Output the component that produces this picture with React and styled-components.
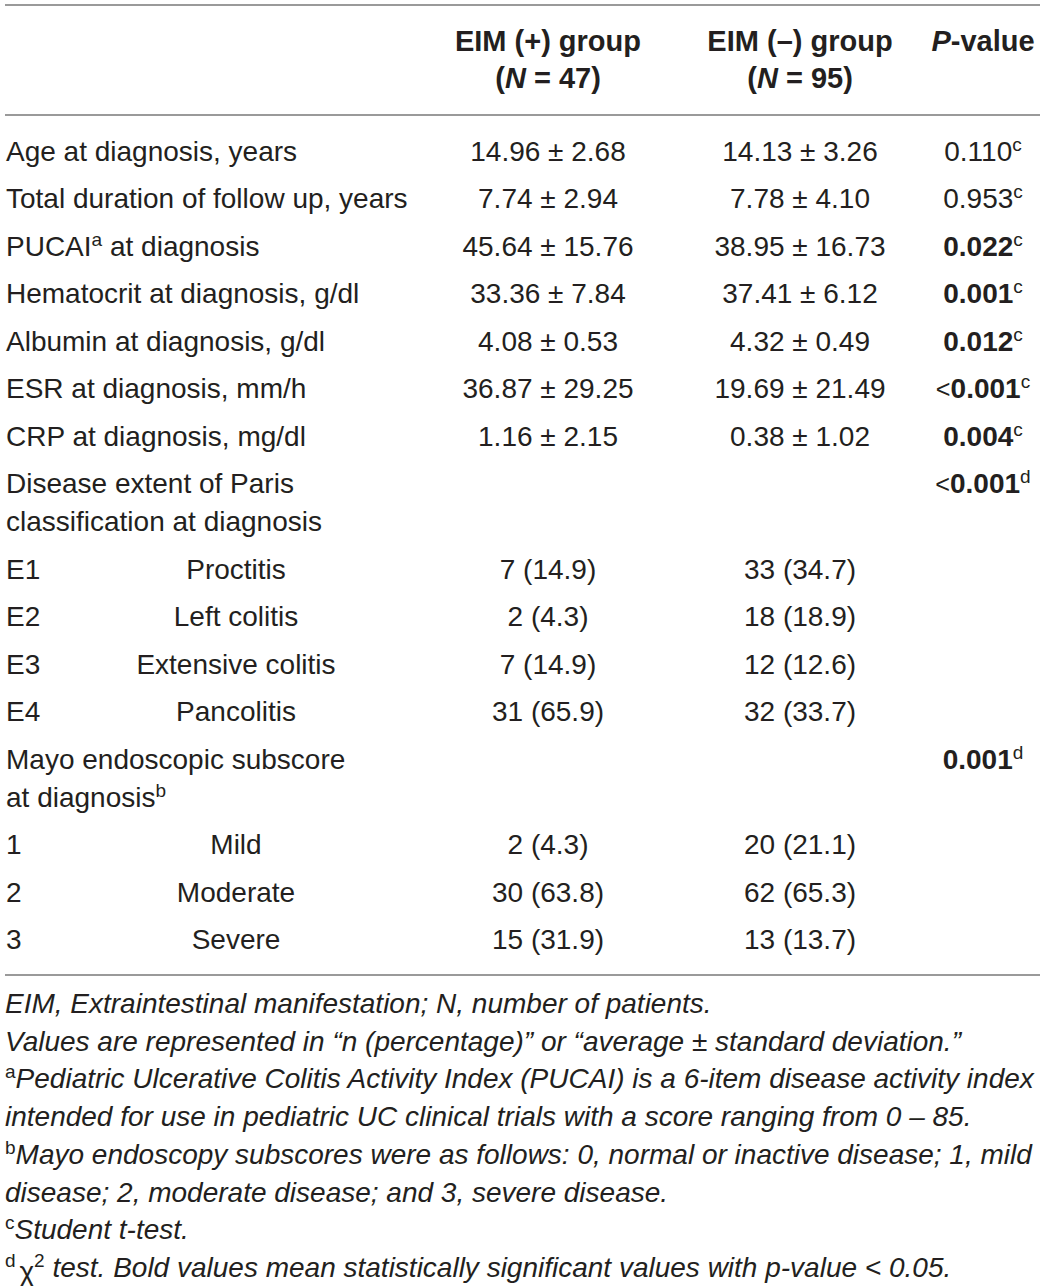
import React from "react";
import styled, { createGlobalStyle } from "styled-components";

const GlobalStyle = createGlobalStyle`
  html, body {
    margin: 0;
    padding: 0;
    background: #ffffff;
  }
  body {
    font-family: "Liberation Sans", Arial, sans-serif;
    color: #231f20;
  }
`;

const summary = [
  { label: "Age at diagnosis, years", plus: "14.96 ± 2.68", minus: "14.13 ± 3.26", p: "0.110", note: "c" },
  { label: "Total duration of follow up, years", plus: "7.74 ± 2.94", minus: "7.78 ± 4.10", p: "0.953", note: "c" },
  { label: "PUCAI", mark: "a", tail: " at diagnosis", plus: "45.64 ± 15.76", minus: "38.95 ± 16.73", p: "0.022", note: "c", bold: true },
  { label: "Hematocrit at diagnosis, g/dl", plus: "33.36 ± 7.84", minus: "37.41 ± 6.12", p: "0.001", note: "c", bold: true },
  { label: "Albumin at diagnosis, g/dl", plus: "4.08 ± 0.53", minus: "4.32 ± 0.49", p: "0.012", note: "c", bold: true },
  { label: "ESR at diagnosis, mm/h", plus: "36.87 ± 29.25", minus: "19.69 ± 21.49", p: "0.001", note: "c", bold: true, lt: true },
  { label: "CRP at diagnosis, mg/dl", plus: "1.16 ± 2.15", minus: "0.38 ± 1.02", p: "0.004", note: "c", bold: true },
];

const extent = [
  { code: "E1", name: "Proctitis", plus: "7 (14.9)", minus: "33 (34.7)" },
  { code: "E2", name: "Left colitis", plus: "2 (4.3)", minus: "18 (18.9)" },
  { code: "E3", name: "Extensive colitis", plus: "7 (14.9)", minus: "12 (12.6)" },
  { code: "E4", name: "Pancolitis", plus: "31 (65.9)", minus: "32 (33.7)" },
];

const mayo = [
  { code: "1", name: "Mild", plus: "2 (4.3)", minus: "20 (21.1)" },
  { code: "2", name: "Moderate", plus: "30 (63.8)", minus: "62 (65.3)" },
  { code: "3", name: "Severe", plus: "15 (31.9)", minus: "13 (13.7)" },
];

const PValue = ({ value, note, bold, lt }) => (
  <Cell>
    {lt && <Lt>&lt;</Lt>}
    {bold ? <Strong>{value}</Strong> : value}
    <Sup>{note}</Sup>
  </Cell>
);

const SubRow = ({ code, name, plus, minus }) => (
  <Row>
    <SubLabel>
      <span>{code}</span>
      <SubName>{name}</SubName>
    </SubLabel>
    <Cell>{plus}</Cell>
    <Cell>{minus}</Cell>
    <Cell />
  </Row>
);

const App = () => {
  return (
    <Page>
      <GlobalStyle />
      <Table>
        <Head>
          <Label />
          <HeadCell>
            EIM (+) group
            <br />
            (<i>N</i> = 47)
          </HeadCell>
          <HeadCell>
            EIM (–) group
            <br />
            (<i>N</i> = 95)
          </HeadCell>
          <HeadCell>
            <i>P</i>-value
          </HeadCell>
        </Head>

        <Body>
          {summary.map((r) => (
            <Row key={r.label}>
              <Label>
                {r.label}
                {r.mark && <Sup>{r.mark}</Sup>}
                {r.tail}
              </Label>
              <Cell>{r.plus}</Cell>
              <Cell>{r.minus}</Cell>
              <PValue value={r.p} note={r.note} bold={r.bold} lt={r.lt} />
            </Row>
          ))}

          <Row>
            <Label>
              Disease extent of Paris
              <br />
              classification at diagnosis
            </Label>
            <Cell />
            <Cell />
            <PValue value="0.001" note="d" bold lt />
          </Row>
          {extent.map((r) => (
            <SubRow key={r.code} {...r} />
          ))}

          <Row>
            <Label>
              Mayo endoscopic subscore
              <br />
              at diagnosis<Sup>b</Sup>
            </Label>
            <Cell />
            <Cell />
            <PValue value="0.001" note="d" bold />
          </Row>
          {mayo.map((r) => (
            <SubRow key={r.code} {...r} />
          ))}
        </Body>

        <Notes>
          <div>EIM, Extraintestinal manifestation; N, number of patients.</div>
          <div>Values are represented in “n (percentage)” or “average ± standard deviation.”</div>
          <div>
            <NoteMark>a</NoteMark>Pediatric Ulcerative Colitis Activity Index (PUCAI) is a 6-item disease activity index
          </div>
          <div>intended for use in pediatric UC clinical trials with a score ranging from 0 – 85.</div>
          <div>
            <NoteMark>b</NoteMark>Mayo endoscopy subscores were as follows: 0, normal or inactive disease; 1, mild
          </div>
          <div>disease; 2, moderate disease; and 3, severe disease.</div>
          <div>
            <NoteMark>c</NoteMark>Student t-test.
          </div>
          <div>
            <NoteMark>d</NoteMark> <Chi>χ</Chi>
            <NoteMark>2</NoteMark> test. Bold values mean statistically significant values with p-value &lt; 0.05.
          </div>
        </Notes>
      </Table>
    </Page>
  );
};

const Page = styled.div`
  width: 1045px;
  padding: 4px 5px 0 5px;
  box-sizing: border-box;
`;

const Table = styled.div`
  width: 1035px;
`;

const columns = `
  display: grid;
  grid-template-columns: 417px 252px 252px 114px;
`;

const Head = styled.div`
  ${columns}
  border-top: 2px solid #9a9a9a;
  border-bottom: 2px solid #9a9a9a;
  padding: 17px 0 17px 0;
  font-weight: bold;
  font-size: 29px;
  line-height: 37px;
`;

const HeadCell = styled.div`
  text-align: center;
  white-space: nowrap;
`;

const Body = styled.div`
  padding: 12px 0 10px 0;
  border-bottom: 2px solid #9a9a9a;
`;

const Row = styled.div`
  ${columns}
  font-size: 28px;
  line-height: 38px;
  padding: 4.75px 0;
`;

const Label = styled.div`
  padding-left: 1px;
`;

const SubLabel = styled.div`
  display: grid;
  grid-template-columns: 61px 338px;
  padding-left: 1px;
`;

const SubName = styled.span`
  text-align: center;
`;

const Cell = styled.div`
  text-align: center;
  white-space: nowrap;
`;

const Strong = styled.b`
  font-weight: bold;
`;

const Lt = styled.span`
  font-size: 0.9em;
`;

const Sup = styled.sup`
  font-size: 0.68em;
  line-height: 0;
  vertical-align: 0.55em;
`;

const Notes = styled.div`
  padding-top: 9px;
  font-style: italic;
  font-size: 28px;
  line-height: 37.7px;
  white-space: nowrap;
`;

const NoteMark = styled.sup`
  font-style: normal;
  font-size: 0.68em;
  line-height: 0;
  vertical-align: 0.55em;
`;

const Chi = styled.span`
  font-style: normal;
  position: relative;
  top: 4px;
  margin-left: -4px;
`;

export default App;
